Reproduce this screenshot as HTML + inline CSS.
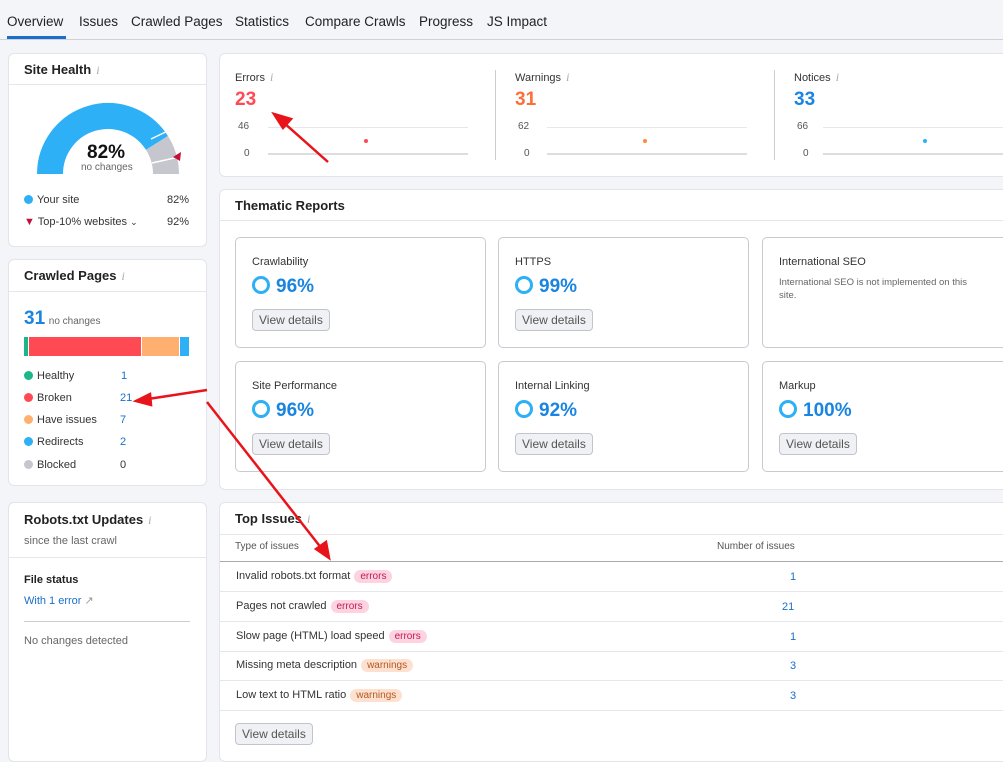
<!DOCTYPE html>
<html><head><meta charset="utf-8"><style>
*{box-sizing:border-box;margin:0;padding:0}
body{width:1003px;height:751px;overflow:hidden;background:#f4f5f9;font-family:"Liberation Sans",sans-serif;color:#333;position:relative;font-size:13px}
.a{position:absolute}
.card{position:absolute;background:#fff;border:1px solid #e3e4ea;border-radius:6px}
.h{font-weight:bold;font-size:13px;color:#222}
.i{color:#aaa;font-family:"Liberation Serif",serif;font-style:italic;font-size:12px;margin-left:5px;font-weight:normal}
.sm{font-size:11px;color:#333}
.box{position:absolute;border:1px solid #c9cad1;border-radius:5px;background:#fff}
.btn{position:absolute;border:1px solid #c3c4cb;background:#f0f1f4;border-radius:4px;font-size:12px;color:#555;padding:3px 6px;height:22px}
.ring{display:inline-block;width:18px;height:18px;border:3.5px solid #2db0f5;border-radius:50%;vertical-align:-2px;margin-right:6px}
.pct{font-size:19px;font-weight:bold;color:#1a85e0}
.tag{display:inline-block;font-size:10px;padding:1px 6px;border-radius:8px;margin-left:4px}
.er{background:#fcd3df;color:#c2185b}
.wa{background:#fde0cf;color:#b35820}
.row{position:absolute;left:0;right:0;height:30px;border-bottom:1px solid #e6e7ec;font-size:11px}
.row span.t{position:absolute;left:16px;top:8px}
.row span.n{position:absolute;left:570px;top:9px;color:#1a6fc9;font-size:11px}
.dot{display:inline-block;width:9px;height:9px;border-radius:50%;margin-right:4px;vertical-align:-1px}
.lg{position:absolute;left:15px;font-size:11px}
.lg b{position:absolute;left:96px;font-weight:normal;color:#1a6fc9}
.tab{position:absolute;top:14px;font-size:13.5px;color:#222;white-space:nowrap}
</style></head><body>
<!-- tabs -->
<div class="a" style="left:0;top:39px;width:1003px;height:1px;background:#cfd0d8"></div>
<div class="a" style="left:7px;top:36px;width:59px;height:3px;background:#1a6fc9"></div>
<span class="tab" style="left:7px">Overview</span>
<span class="tab" style="left:79px">Issues</span>
<span class="tab" style="left:131px">Crawled Pages</span>
<span class="tab" style="left:235px">Statistics</span>
<span class="tab" style="left:305px">Compare Crawls</span>
<span class="tab" style="left:419px">Progress</span>
<span class="tab" style="left:487px">JS Impact</span>

<!-- Site health -->
<div class="card" style="left:8px;top:53px;width:199px;height:194px">
<div class="a h" style="left:15px;top:8px">Site Health<span class="i">i</span></div>
<div class="a" style="left:0;right:0;top:30px;height:1px;background:#e6e7ec"></div>
<svg class="a" style="left:-8px;top:-53px" width="200" height="200">
<path d="M49 173 A58 58 0 0 1 155.96 141.92" fill="none" stroke="#2db0f5" stroke-width="26"/>
<path d="M155.96 141.92 A58 58 0 0 1 165 173" fill="none" stroke="#c6c7ce" stroke-width="26"/>
<line x1="150" y1="138" x2="173" y2="127" stroke="#fff" stroke-width="1.5"/>
<line x1="151" y1="162" x2="178" y2="156" stroke="#fff" stroke-width="1.5"/>
<path d="M172 156 L180 151 L179 160 Z" fill="#c2103a"/>
</svg>
<div class="a" style="left:78px;top:88px;font-size:19px;font-weight:bold;color:#111">82%</div>
<div class="a" style="left:72px;top:108px;font-size:10px;color:#666">no changes</div>
<div class="a" style="left:15px;top:140px;font-size:11px"><span class="dot" style="background:#2db0f5"></span>Your site</div>
<div class="a" style="left:158px;top:140px;font-size:11px">82%</div>
<div class="a" style="left:15px;top:162px;font-size:11px"><span style="color:#c2103a;font-size:11px">▼</span> Top-10% websites <span style="font-size:9px">⌄</span></div>
<div class="a" style="left:158px;top:162px;font-size:11px">92%</div>
</div>

<!-- Crawled pages -->
<div class="card" style="left:8px;top:259px;width:199px;height:227px">
<div class="a h" style="left:15px;top:8px">Crawled Pages<span class="i">i</span></div>
<div class="a" style="left:0;right:0;top:31px;height:1px;background:#e6e7ec"></div>
<div class="a" style="left:15px;top:48px"><span style="font-size:19px;font-weight:bold;color:#1a85e0">31</span> <span style="font-size:10px;color:#666">no changes</span></div>
<div class="a" style="left:15px;top:77px;width:166px;height:19px;display:flex;gap:1px">
<div style="width:4px;background:#1bb788"></div><div style="width:112px;background:#ff4953"></div><div style="width:37px;background:#ffb070"></div><div style="width:9px;background:#2db0f5"></div></div>
<div class="lg" style="top:110px"><span class="dot" style="background:#1bb788"></span>Healthy<b style="left:97px">1</b></div>
<div class="lg" style="top:132px"><span class="dot" style="background:#ff4953"></span>Broken<b>21</b></div>
<div class="lg" style="top:154px"><span class="dot" style="background:#ffb070"></span>Have issues<b>7</b></div>
<div class="lg" style="top:176px"><span class="dot" style="background:#2db0f5"></span>Redirects<b>2</b></div>
<div class="lg" style="top:199px"><span class="dot" style="background:#c6c7ce"></span>Blocked<b style="color:#333">0</b></div>
</div>

<!-- Robots -->
<div class="card" style="left:8px;top:502px;width:199px;height:260px">
<div class="a h" style="left:15px;top:9px">Robots.txt Updates<span class="i">i</span></div>
<div class="a" style="left:15px;top:32px;font-size:11px;color:#666">since the last crawl</div>
<div class="a" style="left:0;right:0;top:54px;height:1px;background:#e6e7ec"></div>
<div class="a" style="left:15px;top:71px;font-size:11px;font-weight:bold;color:#222">File status</div>
<div class="a" style="left:15px;top:91px;font-size:11px;color:#1a6fc9">With 1 error <span style="color:#999">↗</span></div>
<div class="a" style="left:15px;top:118px;width:166px;height:1px;background:#ccc"></div>
<div class="a" style="left:15px;top:132px;font-size:11px;color:#666">No changes detected</div>
</div>

<!-- Errors / warnings / notices -->
<div class="card" style="left:219px;top:53px;width:800px;height:124px">
<div class="a" style="left:275px;top:16px;width:1px;height:90px;background:#ccc"></div>
<div class="a" style="left:554px;top:16px;width:1px;height:90px;background:#ccc"></div>
<div class="a sm" style="left:15px;top:16px">Errors<span class="i">i</span></div>
<div class="a" style="left:15px;top:35px;font-size:19px;font-weight:bold;color:#ff4953">23</div>
<div class="a sm" style="left:18px;top:67px;color:#555;font-size:10px">46</div>
<div class="a sm" style="left:24px;top:94px;color:#555;font-size:10px">0</div>
<div class="a" style="left:48px;top:73px;width:200px;height:1px;background:#e6e7ec"></div>
<div class="a" style="left:48px;top:99px;width:200px;height:2px;background:#ddd"></div>
<div class="a" style="left:144px;top:85px;width:4px;height:4px;border-radius:50%;background:#ff4953"></div>

<div class="a sm" style="left:295px;top:16px">Warnings<span class="i">i</span></div>
<div class="a" style="left:295px;top:35px;font-size:19px;font-weight:bold;color:#ff6d3a">31</div>
<div class="a sm" style="left:298px;top:67px;color:#555;font-size:10px">62</div>
<div class="a sm" style="left:304px;top:94px;color:#555;font-size:10px">0</div>
<div class="a" style="left:327px;top:73px;width:200px;height:1px;background:#e6e7ec"></div>
<div class="a" style="left:327px;top:99px;width:200px;height:2px;background:#ddd"></div>
<div class="a" style="left:423px;top:85px;width:4px;height:4px;border-radius:50%;background:#ff8a3a"></div>

<div class="a sm" style="left:574px;top:16px">Notices<span class="i">i</span></div>
<div class="a" style="left:574px;top:35px;font-size:19px;font-weight:bold;color:#1a85e0">33</div>
<div class="a sm" style="left:577px;top:67px;color:#555;font-size:10px">66</div>
<div class="a sm" style="left:583px;top:94px;color:#555;font-size:10px">0</div>
<div class="a" style="left:603px;top:73px;width:200px;height:1px;background:#e6e7ec"></div>
<div class="a" style="left:603px;top:99px;width:200px;height:2px;background:#ddd"></div>
<div class="a" style="left:703px;top:85px;width:4px;height:4px;border-radius:50%;background:#2db0f5"></div>
</div>

<!-- Thematic -->
<div class="card" style="left:219px;top:189px;width:800px;height:301px">
<div class="a h" style="left:15px;top:8px">Thematic Reports</div>
<div class="a" style="left:0;right:0;top:30px;height:1px;background:#e6e7ec"></div>
<div class="box" style="left:15px;top:47px;width:251px;height:111px">
<div class="a sm" style="left:16px;top:18px">Crawlability</div>
<div class="a" style="left:16px;top:38px"><span class="ring"></span><span class="pct">96%</span></div>
<div class="btn" style="left:16px;top:71px">View details</div></div>
<div class="box" style="left:278px;top:47px;width:251px;height:111px">
<div class="a sm" style="left:16px;top:18px">HTTPS</div>
<div class="a" style="left:16px;top:38px"><span class="ring"></span><span class="pct">99%</span></div>
<div class="btn" style="left:16px;top:71px">View details</div></div>
<div class="box" style="left:542px;top:47px;width:260px;height:111px">
<div class="a sm" style="left:16px;top:18px">International SEO</div>
<div class="a" style="left:16px;top:38px;font-size:9.5px;color:#666;width:205px;line-height:13px">International SEO is not implemented on this site.</div></div>
<div class="box" style="left:15px;top:171px;width:251px;height:111px">
<div class="a sm" style="left:16px;top:18px">Site Performance</div>
<div class="a" style="left:16px;top:38px"><span class="ring"></span><span class="pct">96%</span></div>
<div class="btn" style="left:16px;top:71px">View details</div></div>
<div class="box" style="left:278px;top:171px;width:251px;height:111px">
<div class="a sm" style="left:16px;top:18px">Internal Linking</div>
<div class="a" style="left:16px;top:38px"><span class="ring"></span><span class="pct">92%</span></div>
<div class="btn" style="left:16px;top:71px">View details</div></div>
<div class="box" style="left:542px;top:171px;width:260px;height:111px">
<div class="a sm" style="left:16px;top:18px">Markup</div>
<div class="a" style="left:16px;top:38px"><span class="ring"></span><span class="pct">100%</span></div>
<div class="btn" style="left:16px;top:71px">View details</div></div>
</div>

<!-- Top issues -->
<div class="card" style="left:219px;top:502px;width:800px;height:260px">
<div class="a h" style="left:15px;top:8px">Top Issues<span class="i">i</span></div>
<div class="a" style="left:0;right:0;top:31px;height:1px;background:#e6e7ec"></div>
<div class="a" style="left:15px;top:38px;font-size:10px;color:#555">Type of issues</div>
<div class="a" style="left:497px;top:38px;font-size:10px;color:#555">Number of issues</div>
<div class="a" style="left:0;right:0;top:58px;height:1px;background:#aaa"></div>
<div class="row" style="top:59px"><span class="t">Invalid robots.txt format<span class="tag er">errors</span></span><span class="n">1</span></div>
<div class="row" style="top:89px"><span class="t">Pages not crawled<span class="tag er">errors</span></span><span class="n" style="left:562px">21</span></div>
<div class="row" style="top:119px"><span class="t">Slow page (HTML) load speed<span class="tag er">errors</span></span><span class="n">1</span></div>
<div class="row" style="top:148px"><span class="t">Missing meta description<span class="tag wa">warnings</span></span><span class="n">3</span></div>
<div class="row" style="top:178px"><span class="t">Low text to HTML ratio<span class="tag wa">warnings</span></span><span class="n">3</span></div>
<div class="btn" style="left:15px;top:220px">View details</div>
</div>

<!-- red annotation arrows -->
<svg class="a" style="left:0;top:0" width="1003" height="751">
<g stroke="#e8141a" stroke-width="2.5" fill="#e8141a">
<line x1="328" y1="162" x2="283" y2="122"/><path d="M274 114 L291 119 L283 128 Z"/>
<line x1="207" y1="390" x2="148" y2="399"/><path d="M136 401 L150 394 L151 405 Z"/>
<line x1="207" y1="402" x2="322" y2="549"/><path d="M329 558 L316 549 L326 542 Z"/>
</g></svg>
</body></html>
